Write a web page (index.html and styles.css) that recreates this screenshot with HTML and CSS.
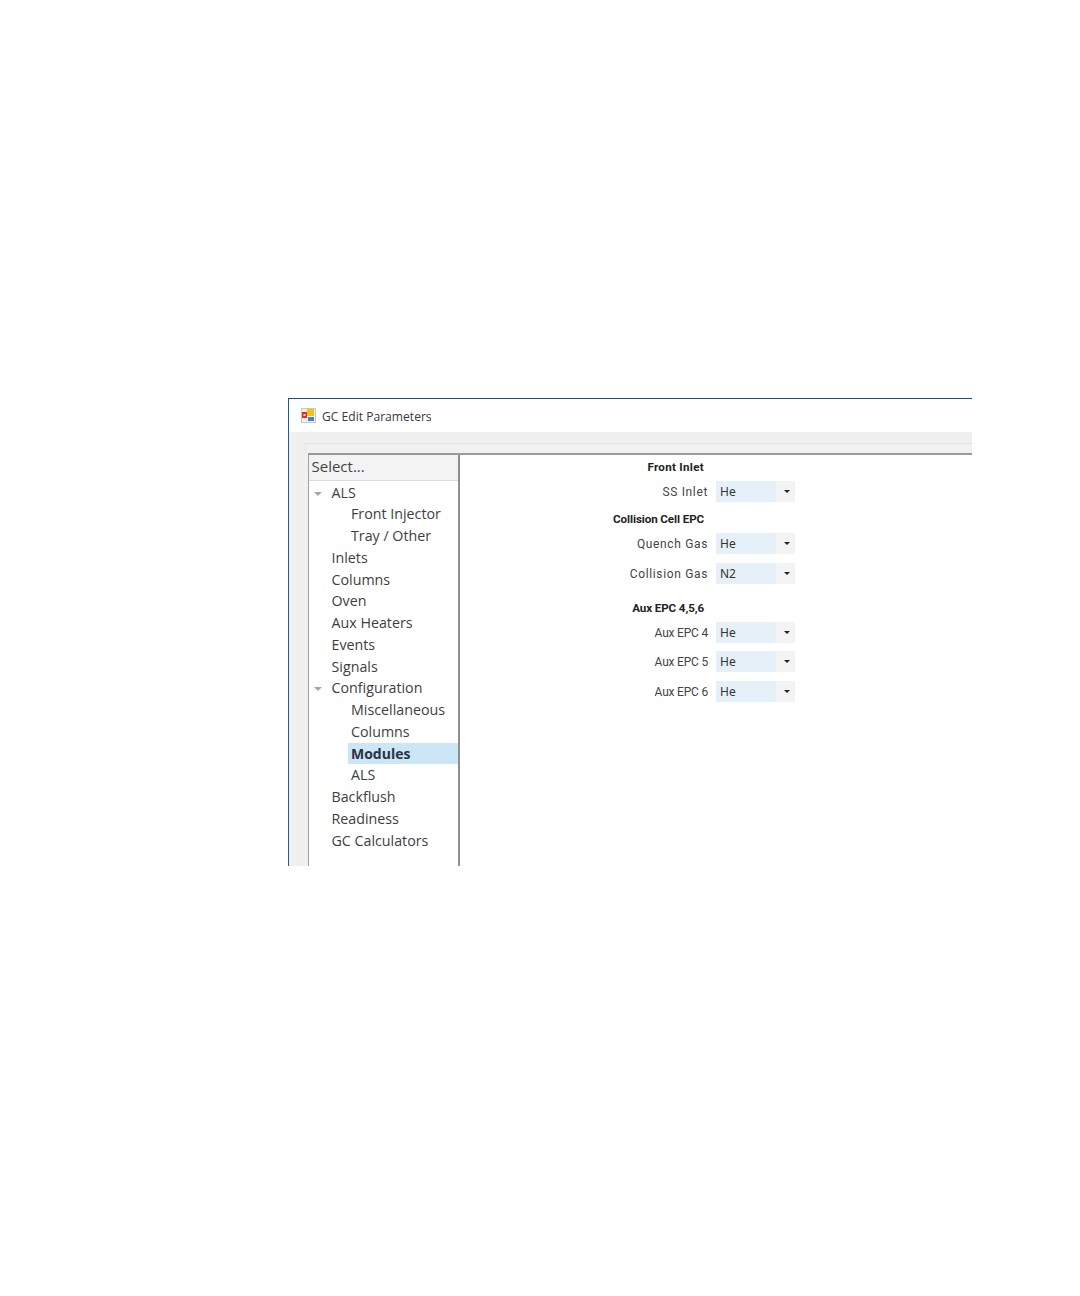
FILE: index.html
```html
<!DOCTYPE html>
<html lang="en">
<head>
<meta charset="utf-8">
<title>GC Edit Parameters</title>
<link rel="stylesheet" href="styles.css">
</head>
<body>
<div class="window">
  <div class="titlebar">
    <svg class="app-icon" width="15" height="15" viewBox="0 0 15 15">
      <rect x="0.5" y="0.5" width="14" height="14" fill="#f4f1ea" stroke="#c9c6c0"/>
      <rect x="1" y="4" width="5" height="6" fill="#d8342c"/>
      <rect x="2.5" y="6" width="2" height="2" fill="#f7d9d0"/>
      <rect x="6" y="1" width="7" height="7" fill="#f2c21c"/>
      <rect x="7" y="9" width="6" height="4" fill="#3f7fd0"/>
    </svg>
    <span class="title">GC Edit Parameters</span>
  </div>
  <div class="client">
    <div class="tabstrip"></div>
    <div class="panes">
      <div class="nav">
        <div class="nav-head">Select...</div>
        <ul class="tree">
          <li class="node lvl1"><span class="caret"></span>ALS</li>
          <li class="node lvl2">Front Injector</li>
          <li class="node lvl2">Tray / Other</li>
          <li class="node lvl1">Inlets</li>
          <li class="node lvl1">Columns</li>
          <li class="node lvl1">Oven</li>
          <li class="node lvl1">Aux Heaters</li>
          <li class="node lvl1">Events</li>
          <li class="node lvl1">Signals</li>
          <li class="node lvl1"><span class="caret"></span>Configuration</li>
          <li class="node lvl2">Miscellaneous</li>
          <li class="node lvl2">Columns</li>
          <li class="node lvl2 selected"><span class="sel-label">Modules</span></li>
          <li class="node lvl2">ALS</li>
          <li class="node lvl1">Backflush</li>
          <li class="node lvl1">Readiness</li>
          <li class="node lvl1">GC Calculators</li>
        </ul>
      </div>
      <div class="form">
        <div class="head head-wide">Front Inlet</div>
        <div class="row mt6"><span class="label">SS Inlet</span><div class="combo"><span class="value">He</span><span class="drop"></span></div></div>
        <div class="head mt9">Collision Cell EPC</div>
        <div class="row mt6"><span class="label">Quench Gas</span><div class="combo"><span class="value">He</span><span class="drop"></span></div></div>
        <div class="row mt9"><span class="label">Collision Gas</span><div class="combo"><span class="value">N2</span><span class="drop"></span></div></div>
        <div class="head mt16">Aux EPC 4,5,6</div>
        <div class="row mt6"><span class="label label-tight">Aux EPC 4</span><div class="combo"><span class="value">He</span><span class="drop"></span></div></div>
        <div class="row mt8"><span class="label label-tight">Aux EPC 5</span><div class="combo"><span class="value">He</span><span class="drop"></span></div></div>
        <div class="row mt9"><span class="label label-tight">Aux EPC 6</span><div class="combo"><span class="value">He</span><span class="drop"></span></div></div>
      </div>
    </div>
  </div>
</div>
</body>
</html>
```
FILE: styles.css
```css
* { box-sizing: border-box; }
html, body { margin: 0; background: #fff; }
body { padding: 398px 0 0 288px; height: 1296px; overflow: hidden; }
.window {
  width: 684px;
  height: 468px;
  border-top: 1px solid #1c4f78;
  border-left: 1px solid #1c5f86;
  display: flex;
  flex-direction: column;
  overflow: hidden;
}
.titlebar {
  height: 33px;
  flex: none;
  display: flex;
  align-items: center;
  padding-left: 12px;
  gap: 6px;
  background: #fff;
}
.app-icon { display: block; flex: none; }
.title {
  font: 12.1px "Open Sans", sans-serif;
  color: #3a3a3a;
  padding-top: 1px;
}
.client {
  flex: 1;
  display: flex;
  flex-direction: column;
  background: #f0f0f0;
  padding: 11px 0 0 16px;
  min-height: 0;
}
.tabstrip {
  height: 10px;
  flex: none;
  background: #f1f1f1;
  border-top: 1px solid #e4e4e4;
  border-left: 1px solid #e6e6e6;
}
.panes {
  flex: 1;
  display: flex;
  min-height: 0;
  margin-left: 3px;
  border-top: 2px solid #9a9a9a;
  background: #fff;
  border-left: 1px solid #a0a0a0;
}
.nav {
  width: 151px;
  flex: none;
  border-right: 2px solid #8e8e8e;
  background: #fff;
}
.nav-head {
  height: 26px;
  padding: 0 0 3px 2.5px;
  display: flex;
  align-items: center;
  font: 15px "Open Sans", sans-serif;
  color: #444;
  background: #f3f3f3;
  border-bottom: 1px solid #dcdcdc;
}
.tree { list-style: none; margin: 0; padding: 0.6px 0 0; }
.node {
  height: 21.75px;
  font: 14.25px/21.75px "Open Sans", sans-serif;
  color: #3e3e42;
  white-space: nowrap;
  position: relative;
}
.lvl1 { padding-left: 22.5px; }
.lvl2 { padding-left: 42px; }
.selected { padding-left: 39px; }
.sel-label {
  display: block;
  height: 100%;
  padding-left: 3px;
  background: #cce6f7;
  font-weight: 700;
  font-size: 14px;
  color: #2a3340;
}
.caret {
  position: absolute;
  left: 5px;
  top: 10px;
  width: 0;
  height: 0;
  border-left: 4px solid transparent;
  border-right: 4px solid transparent;
  border-top: 4px solid #a6a6a6;
}
.form {
  flex: 1;
  padding-top: 4px;
  background: #fff;
  display: flex;
  flex-direction: column;
}
.head {
  width: 244px;
  height: 16px;
  text-align: right;
  font: 700 11.6px/16px Roboto, sans-serif;
  color: #222;
  letter-spacing: -0.1px;
}
.head-wide { letter-spacing: 0.3px; }
.row {
  display: flex;
  align-items: center;
  gap: 8px;
  height: 21px;
}
.label {
  width: 248px;
  text-align: right;
  font: 12px Roboto, sans-serif;
  letter-spacing: 0.65px;
  color: #444;
  white-space: nowrap;
}
.label-tight { letter-spacing: -0.2px; }
.combo {
  width: 79px;
  height: 21px;
  display: flex;
  background: #f3f3f3;
}
.value {
  width: 60px;
  background: #e6f0f9;
  padding-left: 4px;
  font: 12px/21px "Noto Sans", sans-serif;
  color: #333;
}
.drop {
  flex: 1;
  position: relative;
}
.drop::after {
  content: "";
  position: absolute;
  left: 8px;
  top: 9px;
  border-left: 3px solid transparent;
  border-right: 3px solid transparent;
  border-top: 3px solid #222;
}
.mt6 { margin-top: 6px; }
.mt8 { margin-top: 8px; }
.mt9 { margin-top: 9px; }
.mt16 { margin-top: 16px; }
```
